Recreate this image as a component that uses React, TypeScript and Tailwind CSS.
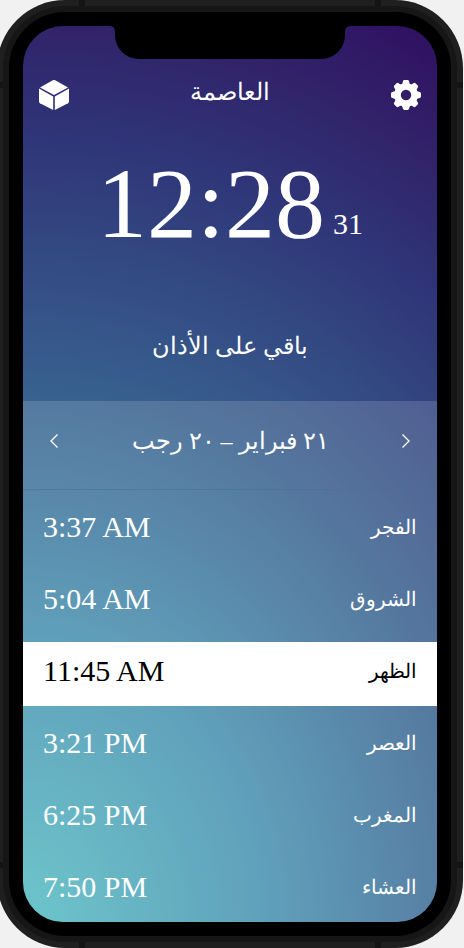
const prayers = [
  { name: 'الفجر', time: '3:37 AM', active: false },
  { name: 'الشروق', time: '5:04 AM', active: false },
  { name: 'الظهر', time: '11:45 AM', active: true },
  { name: 'العصر', time: '3:21 PM', active: false },
  { name: 'المغرب', time: '6:25 PM', active: false },
  { name: 'العشاء', time: '7:50 PM', active: false },
];

function CubeIcon() {
  return (
    <svg viewBox="0 0 30 30" className="size-[30px] fill-white" aria-hidden="true">
      <path d="M13.8 0.3 Q15 -0.3 16.2 0.3 L29 7.4 L15 15 L1 7.4 Z" />
      <path d="M0 8.6 L14.2 16.4 V30 L1 23.2 Q0 22.6 0 21.6 Z" />
      <path d="M30 8.6 L15.8 16.4 V30 L29 23.2 Q30 22.6 30 21.6 Z" />
    </svg>
  );
}

const toothAngles = [0, 45, 90, 135, 180, 225, 270, 315];

function GearIcon() {
  return (
    <svg viewBox="-15 -15 30 30" className="size-[30px]" aria-hidden="true">
      <circle r="8.4" fill="none" stroke="white" strokeWidth="6.4" />
      {toothAngles.map((angle) => (
        <path
          key={angle}
          transform={`rotate(${angle})`}
          d="M-5 -10 Q-3.4 -11 -3.1 -13.6 Q-2.8 -15 -1.6 -15 H1.6 Q2.8 -15 3.1 -13.6 Q3.4 -11 5 -10 Z"
          fill="white"
        />
      ))}
    </svg>
  );
}

function Chevron({ d }: { d: string }) {
  return (
    <svg viewBox="0 0 8 14" className="h-[14px] w-2" fill="none" stroke="white" strokeWidth="1.3" aria-hidden="true">
      <path d={d} />
    </svg>
  );
}

function AntennaBands() {
  return (
    <div aria-hidden="true">
      <i className="absolute left-[82px] top-0 h-[6px] w-[6px] bg-[#141414]" />
      <i className="absolute right-[82px] top-0 h-[6px] w-[6px] bg-[#141414]" />
      <i className="absolute bottom-0 left-[82px] h-[6px] w-[6px] bg-[#141414]" />
      <i className="absolute bottom-0 right-[82px] h-[6px] w-[6px] bg-[#141414]" />
      <i className="absolute left-0 top-[82px] h-[6px] w-[6px] bg-[#141414]" />
      <i className="absolute right-0 top-[82px] h-[6px] w-[6px] bg-[#141414]" />
      <i className="absolute bottom-[80px] left-0 h-[6px] w-[6px] bg-[#141414]" />
      <i className="absolute bottom-[80px] right-0 h-[6px] w-[6px] bg-[#141414]" />
    </div>
  );
}

export default function App() {
  return (
    <div className="overflow-hidden bg-[#f1f1f1] font-['Liberation_Serif',serif] text-white">
      <div className="relative -ml-[3px] mr-px rounded-[68px] bg-[#1f1f1f] p-[6px]">
        <AntennaBands />
        <div className="rounded-[62px] bg-[#161616] p-[6px]">
          <div className="rounded-[56px] bg-black p-[14px]">
            <main className="relative overflow-hidden rounded-[40px] bg-[radial-gradient(880px_1022px_at_0%_100%,#54bcc3_0%,#448fae_28%,#38628f_51%,#2f3578_77%,#31246b_87%,#300e60_100%)]">
              <svg viewBox="0 0 240 33" className="absolute left-1/2 top-0 h-[33px] w-[240px] -translate-x-1/2" aria-hidden="true">
                <path d="M0 0 Q5 0 5 6 V9 A24 24 0 0 0 29 33 H211 A24 24 0 0 0 235 9 V6 Q235 0 240 0 Z" />
              </svg>

              <header className="flex h-[108px] items-end justify-between px-4 pb-6">
                <button type="button" aria-label="القبلة">
                  <CubeIcon />
                </button>
                <h1 dir="rtl" className="text-[24px] leading-[36px]">العاصمة</h1>
                <button type="button" aria-label="الإعدادات">
                  <GearIcon />
                </button>
              </header>

              <section className="h-[267px]">
                <div className="flex items-end justify-center gap-2 pt-4">
                  <span className="text-[100px] leading-[108px]">12:28</span>
                  <span className="text-[30px] leading-[68px]">31</span>
                </div>
                <p dir="rtl" className="pt-16 text-center text-[24px] leading-[48px]">باقي على الأذان</p>
              </section>

              <div className="bg-white/15">
                <nav className="flex h-[89px] items-center justify-between border-b border-[#4b7099]/60 px-[27px] pb-2">
                  <button type="button" aria-label="اليوم السابق">
                    <Chevron d="M7.5 0.5 L1 7 L7.5 13.5" />
                  </button>
                  <h2 dir="rtl" className="text-[24px] leading-[40px]">٢١ فبراير – ٢٠ رجب</h2>
                  <button type="button" aria-label="اليوم التالي">
                    <Chevron d="M0.5 0.5 L7 7 L0.5 13.5" />
                  </button>
                </nav>

                <table className="block w-full">
                  <tbody className="flex flex-col gap-2 pt-2">
                    {prayers.map((prayer) => (
                      <tr
                        key={prayer.name}
                        className={
                          prayer.active
                            ? 'flex h-16 items-center justify-between bg-white px-5 pb-1.5 text-black'
                            : 'flex h-16 items-center justify-between px-5 pb-1.5'
                        }
                      >
                        <td className="text-[30px] leading-[36px]">{prayer.time}</td>
                        <th scope="row" dir="rtl" className="text-[20px] font-normal leading-[36px]">{prayer.name}</th>
                      </tr>
                    ))}
                  </tbody>
                </table>
              </div>
            </main>
          </div>
        </div>
      </div>
    </div>
  );
}
